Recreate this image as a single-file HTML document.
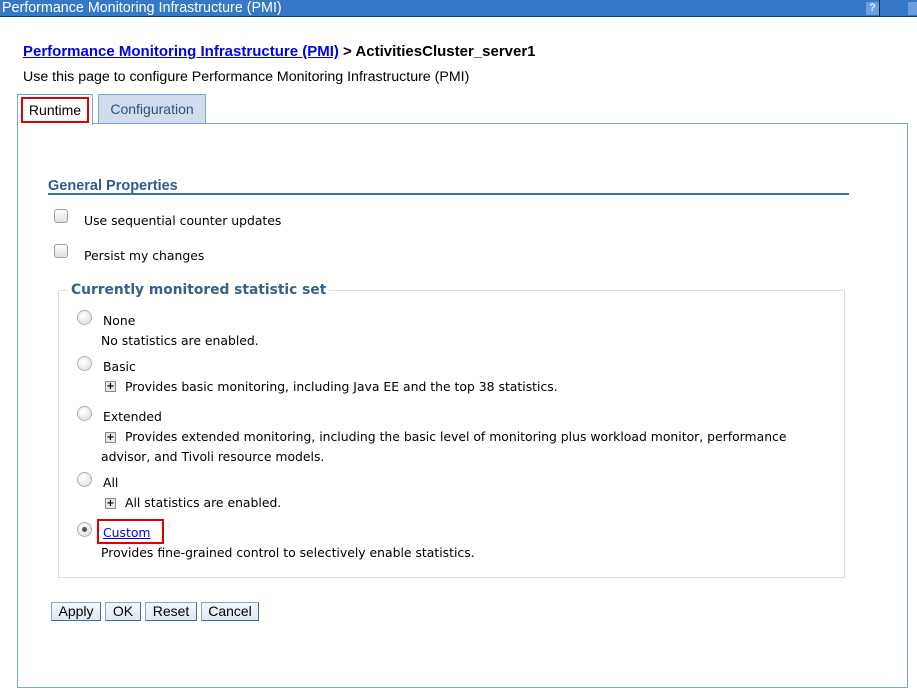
<!DOCTYPE html>
<html><head><style>
body{margin:0;width:917px;height:694px;background:#fff;position:relative;overflow:hidden;font-family:"DejaVu Sans",Verdana,sans-serif;font-size:12.4px;color:#000}
.a{position:absolute;white-space:nowrap}
.lib{font-family:"Liberation Sans",Arial,sans-serif}
.cb{position:absolute;width:12px;height:12px;border:1px solid #a0a0a0;border-radius:3px;background:linear-gradient(#fdfdfd,#e0e0e0)}
.rb{position:absolute;width:13px;height:13px;border:1px solid #b0b0b0;border-radius:50%;background:radial-gradient(circle at 40% 35%,#fff,#dcdcdc)}
.pl{position:absolute;width:9px;height:9px;border:1px solid #8a8a8a;background:#e8e8e8;font:bold 10px/9px "DejaVu Sans",sans-serif;text-align:center;color:#000}
.btn{position:absolute;top:602px;height:17px;border:1px solid #3a6ea5;border-top-color:#8ab;border-left-color:#8ab;background:linear-gradient(#f4f8fd,#dfe8f5);font:14px/17px "Liberation Sans",Arial,sans-serif;text-align:center}
</style></head><body>
<div class="a lib" style="left:0;top:0;width:917px;height:16px;background:#3478c6;border-bottom:1px solid #1a3a66;color:#fff;font-size:14.3px;line-height:17px;padding-left:2px">Performance Monitoring Infrastructure (PMI)</div>
<div class="a" style="left:866px;top:2px;width:13px;height:13px;background:#6a9ee0;color:#cfe;font:bold 11px/13px sans-serif;text-align:center">?</div>
<div class="a" style="left:879px;top:0;width:1px;height:16px;background:#123"></div>
<div class="a" style="left:908px;top:2px;width:9px;height:13px;background:#6a9ee0"></div>

<div class="a lib" style="left:23px;top:43px;font-size:15px;font-weight:bold"><span style="color:#0000ee;text-decoration:underline">Performance Monitoring Infrastructure (PMI)</span> &gt; ActivitiesCluster_server1</div>
<div class="a lib" style="left:23px;top:69px;font-size:14.2px">Use this page to configure Performance Monitoring Infrastructure (PMI)</div>

<div class="a" style="left:17px;top:123px;width:889px;height:563px;border:1px solid #7fa2d8"></div>
<div class="a" style="left:17px;top:94px;width:74px;height:30px;border:1px solid #7fa2d8;border-bottom:none;background:#fff"></div>
<div class="a lib" style="left:21px;top:97px;width:64px;height:22px;border:2px solid #e00000;font-size:14px;line-height:22px;text-align:center">Runtime</div>
<div class="a lib" style="left:98px;top:94px;width:106px;height:28px;border:1px solid #7fa2d8;background:#d3dced;color:#2e4f7a;font-size:14px;line-height:29px;text-align:center">Configuration</div>

<div class="a lib" style="left:48px;top:178px;font-size:14.5px;font-weight:bold;color:#2e5b8e">General Properties</div>
<div class="a" style="left:48px;top:193px;width:801px;height:2px;background:#3a6ea5"></div>

<div class="cb" style="left:54px;top:209px"></div>
<div class="a" style="left:84px;top:213px">Use sequential counter updates</div>
<div class="cb" style="left:54px;top:244px"></div>
<div class="a" style="left:84px;top:248px">Persist my changes</div>

<div class="a" style="left:58px;top:290px;width:785px;height:286px;border:1px solid #dedede"></div>
<div class="a" style="left:68px;top:282px;background:#fff;padding:0 3px;font-weight:bold;font-size:13.8px;color:#3a5f8a">Currently monitored statistic set</div>

<div class="rb" style="left:77px;top:310px"></div>
<div class="a" style="left:103px;top:313px">None</div>
<div class="a" style="left:101px;top:333px">No statistics are enabled.</div>

<div class="rb" style="left:77px;top:356px"></div>
<div class="a" style="left:103px;top:359px">Basic</div>
<div class="pl" style="left:105px;top:381px">+</div>
<div class="a" style="left:125px;top:379px">Provides basic monitoring, including Java EE and the top 38 statistics.</div>

<div class="rb" style="left:77px;top:406px"></div>
<div class="a" style="left:103px;top:409px">Extended</div>
<div class="pl" style="left:105px;top:432px">+</div>
<div class="a" style="left:125px;top:429px">Provides extended monitoring, including the basic level of monitoring plus workload monitor, performance</div>
<div class="a" style="left:101px;top:449px">advisor, and Tivoli resource models.</div>

<div class="rb" style="left:77px;top:472px"></div>
<div class="a" style="left:103px;top:475px">All</div>
<div class="pl" style="left:105px;top:498px">+</div>
<div class="a" style="left:125px;top:495px">All statistics are enabled.</div>

<div class="rb" style="left:77px;top:522px"><div style="position:absolute;left:4px;top:4px;width:5px;height:5px;border-radius:50%;background:#555"></div></div>
<div class="a" style="left:97px;top:519px;width:63px;height:21px;border:2px solid #e00000"></div>
<div class="a" style="left:103px;top:525px;color:#0000ee;text-decoration:underline">Custom</div>
<div class="a" style="left:101px;top:545px">Provides fine-grained control to selectively enable statistics.</div>

<div class="btn" style="left:51px;width:48px">Apply</div>
<div class="btn" style="left:105px;width:34px">OK</div>
<div class="btn" style="left:145px;width:50px">Reset</div>
<div class="btn" style="left:201px;width:56px">Cancel</div>
</body></html>
